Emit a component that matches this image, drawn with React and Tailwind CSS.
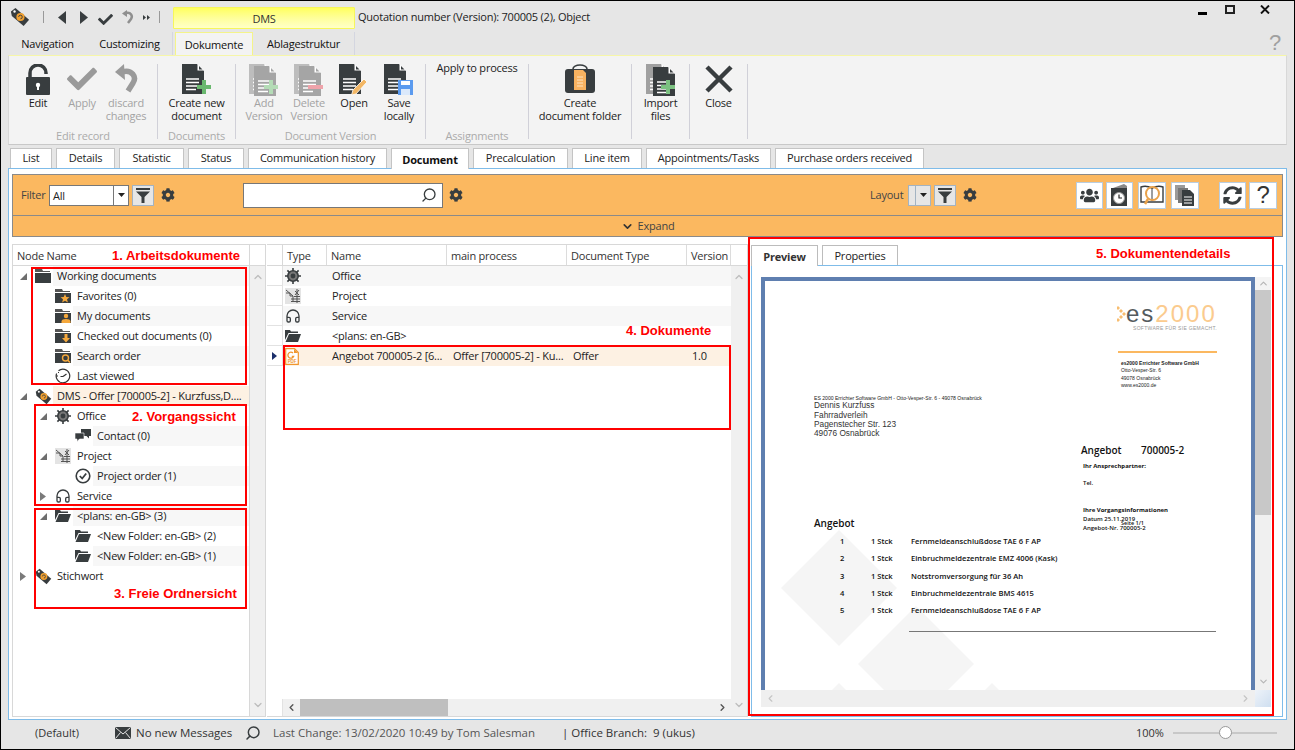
import React from "react";
import { FaCog, FaCheck, FaUsers, FaSyncAlt } from "react-icons/fa";
import { Headphones, Search, ChevronUp, ChevronDown, ChevronLeft, ChevronRight } from "lucide-react";

const DARK = "#383d3f";

/* ---------- Icons ---------- */
const TagIcon = ({ size = 20 }) => (
  <svg width={size} height={size} viewBox="0 0 22 22">
    <path d="M1 5 L6 1 L21 14 L15 21 L2 10 Z" fill={DARK} />
    <circle cx="11.5" cy="11" r="4.5" fill="#f0a030" />
    <path d="M9.5 11 a2 2 0 1 1 2 2" fill="none" stroke={DARK} strokeWidth="1" />
    <circle cx="5" cy="5" r="1.3" fill="#fff" />
  </svg>
);

const Funnel = () => (
  <svg width="14" height="15" viewBox="0 0 14 15">
    <rect x="0" y="0" width="14" height="2" fill={DARK} />
    <path d="M0 3.5 H14 L8.5 9 V15 H5.5 V9 Z" fill={DARK} />
  </svg>
);

const Gear = () => <FaCog size={14} color={DARK} />;

const Caret = () => (
  <svg width="7" height="4" viewBox="0 0 7 4">
    <path d="M0 0 H7 L3.5 4 Z" fill="#222" />
  </svg>
);

// dark sheet with a folded corner, the overlay is drawn on top
const DocSheet = ({ fill = DARK, x = 0, y = 0 }) => (
  <g transform={`translate(${x} ${y})`}>
    <path d="M0 0 H15 L22 7 V30 H0 Z" fill={fill} />
    <path d="M16 1 L21 6 H16 Z" fill="#fff" />
    <path d="M15.5 0 L15.5 6.5 L22 6.5 Z" fill="#fff" />
    <path d="M17 2 L20.5 5.5 H17 Z" fill={fill} />
    <path d="M4 15 H17 M4 18.5 H17 M4 22 H17 M4 25.5 H14" stroke="#fff" strokeWidth="1.5" />
  </g>
);

const Plus = ({ color = "#69b86e" }) => (
  <path d="M20 16 H24 V21 H29 V25 H24 V30 H20 V25 H15 V21 H20 Z" fill={color} />
);

const NewDocIcon = () => (
  <svg width="30" height="32" viewBox="0 0 30 32">
    <DocSheet />
    <Plus />
  </svg>
);

const AddVersionIcon = () => (
  <svg width="30" height="32" viewBox="0 0 30 32">
    <DocSheet fill="#bdbdbd" x="0" y="0" />
    <DocSheet fill="#a5a5a5" x="5" y="2" />
    <Plus color="#b4dcb6" />
  </svg>
);

const DeleteVersionIcon = () => (
  <svg width="30" height="32" viewBox="0 0 30 32">
    <DocSheet fill="#bdbdbd" x="0" y="0" />
    <DocSheet fill="#a5a5a5" x="5" y="2" />
    <rect x="14" y="21" width="15" height="4" fill="#eea3aa" />
  </svg>
);

const OpenIcon = () => (
  <svg width="30" height="32" viewBox="0 0 30 32">
    <DocSheet />
    <path d="M25 15 L28 18 L17 30 L12.5 31 L14 26 Z" fill="#f3b765" stroke="#fff" strokeWidth="0.8" />
  </svg>
);

const SaveIcon = () => (
  <svg width="30" height="32" viewBox="0 0 30 32">
    <DocSheet />
    <rect x="14" y="16" width="15" height="15" fill="#5b9bef" />
    <rect x="17" y="17" width="9" height="4" fill="#fff" />
    <rect x="17" y="25" width="9" height="6" fill="#dbe9fb" />
  </svg>
);

const LockIcon = () => (
  <svg width="26" height="32" viewBox="0 0 26 32">
    <path d="M5 14 V9 a8 8 0 0 1 16 0 V10" fill="none" stroke={DARK} strokeWidth="3.5" />
    <rect x="1" y="13" width="24" height="18" rx="1" fill={DARK} />
    <circle cx="13" cy="21" r="2.2" fill="#fff" />
    <rect x="12" y="21" width="2" height="5" fill="#fff" />
  </svg>
);

const ApplyIcon = () => <FaCheck size={30} color="#9a9a9a" />;

const UndoIcon = () => (
  <svg width="24" height="30" viewBox="0 0 24 30">
    <path d="M8 8 C 18 5, 23 13, 19 19 L14 27" fill="none" stroke="#9a9a9a" strokeWidth="5.5" />
    <path d="M1 8 L10 0 L11 16 Z" fill="#9a9a9a" />
  </svg>
);

const BriefcaseIcon = () => (
  <svg width="32" height="30" viewBox="0 0 32 30">
    <path d="M9 5 a7 4 0 0 1 14 0" fill="none" stroke={DARK} strokeWidth="1.6" />
    <rect x="1" y="5" width="30" height="24" rx="3" fill={DARK} />
    <path d="M10 6 H19 L22 9 V26 H10 Z" fill="#f8b260" />
    <path d="M13 13 H19 M13 16 H19 M13 19 H19 M13 22 H19" stroke="#fde3c2" strokeWidth="1" />
  </svg>
);

const ImportIcon = () => (
  <svg width="30" height="32" viewBox="0 0 30 32">
    <DocSheet fill="#a0a0a0" x="0" y="0" />
    <DocSheet x="7" y="3" />
    <Plus color="#7cc181" />
  </svg>
);

const CloseIcon = () => (
  <svg width="30" height="30" viewBox="0 0 30 30">
    <path d="M3 3 L27 27 M27 3 L3 27" stroke={DARK} strokeWidth="4.5" />
  </svg>
);

const ExpandedArrow = () => (
  <svg width="7" height="7" viewBox="0 0 7 7">
    <path d="M7 0 V7 H0 Z" fill="#6e6e6e" />
  </svg>
);

const CollapsedArrow = () => (
  <svg width="6" height="9" viewBox="0 0 6 9">
    <path d="M0 0 L6 4.5 L0 9 Z" fill="#7a7a7a" />
  </svg>
);

const Folder = ({ children }) => (
  <svg width="16" height="16" viewBox="0 0 16 16">
    <path d="M0 1 H7 L8 3 H15 V4 H0 Z" fill="#555" />
    <path d="M0 5 H16 V15 H0 Z" fill={DARK} />
    {children}
  </svg>
);

const FolderStar = () => (
  <Folder>
    <path d="M10 6 L11.3 9 L14.5 9.2 L12 11.3 L12.9 14.5 L10 12.7 L7.1 14.5 L8 11.3 L5.5 9.2 L8.7 9 Z" fill="#f5a83c" />
  </Folder>
);
const FolderUser = () => (
  <Folder>
    <circle cx="11" cy="8" r="2.2" fill="#f5a83c" />
    <path d="M6.5 15 V13 Q7 11 11 11 Q15 11 15.5 13 V15 Z" fill="#f5a83c" />
  </Folder>
);
const FolderDown = () => (
  <Folder>
    <path d="M9.5 6 H12.5 V10 H15 L11 14.5 L7 10 H9.5 Z" fill="#f5a83c" />
  </Folder>
);
const FolderSearch = () => (
  <Folder>
    <circle cx="10.5" cy="10" r="3" fill="none" stroke="#f5a83c" strokeWidth="1.4" />
    <path d="M12.5 12 L15 14.5" stroke="#f5a83c" strokeWidth="1.6" />
  </Folder>
);

const OpenFolder = () => (
  <svg width="16" height="14" viewBox="0 0 16 14">
    <path d="M0 1 H5 L6 2.5 H13 V4 H3.5 L0 11 Z" fill={DARK} />
    <path d="M4 5 H16 L13 13 H0.5 Z" fill={DARK} />
  </svg>
);

const ClockIcon = () => (
  <svg width="16" height="16" viewBox="0 0 16 16">
    <path d="M3.5 2.8 A6.8 6.8 0 1 1 1.6 5.5" fill="none" stroke="#333" strokeWidth="1.2" />
    <path d="M1 8 H3 M3 4 L4 5" stroke="#333" strokeWidth="1" />
    <path d="M8 8.5 L11.5 6 M8 8.5 L5.5 8.5" stroke="#333" strokeWidth="1.2" />
  </svg>
);

const WheelIcon = () => (
  <svg width="16" height="16" viewBox="0 0 16 16">
    <path d="M8 0 V16 M0 8 H16 M2.4 2.4 L13.6 13.6 M13.6 2.4 L2.4 13.6" stroke={DARK} strokeWidth="1.6" />
    <circle cx="8" cy="8" r="5.2" fill="#777" stroke={DARK} strokeWidth="1.6" />
    <circle cx="8" cy="8" r="2.4" fill={DARK} />
  </svg>
);

const ProjectIcon = () => (
  <svg width="16" height="16" viewBox="0 0 16 16">
    <rect width="16" height="16" fill="#e4e4e4" />
    <path d="M1 2 L8 8 V14 M1 5 H5 V8 H8 M6 11 H15 M6 13.5 H15 M9 8.5 H15 M10 3 L14 7 M14 2 L10 7 M12 1 V15" stroke="#555" strokeWidth="1" fill="none" />
  </svg>
);

const CheckCircle = () => (
  <svg width="16" height="16" viewBox="0 0 16 16">
    <circle cx="8" cy="8" r="6.8" fill="#fff" stroke={DARK} strokeWidth="1.6" />
    <path d="M4.8 8 L7.2 10.5 L11.2 5.5" fill="none" stroke={DARK} strokeWidth="1.8" />
  </svg>
);

const ChatIcon = () => (
  <svg width="16" height="14" viewBox="0 0 16 14">
    <path d="M6 0 H16 V7 H14 V9.5 L11.5 7 H6 Z" fill={DARK} />
    <path d="M0 4 H9 V10 H4.5 L2 12.5 V10 H0 Z" fill={DARK} stroke="#fff" strokeWidth="0.6" />
  </svg>
);

const HeadsetIcon = () => <Headphones size={16} color={DARK} strokeWidth={2} />;

const PdfIcon = () => (
  <svg width="14" height="17" viewBox="0 0 14 17">
    <path d="M0.7 0.7 H9.5 L13.3 4.5 V16.3 H0.7 Z" fill="#fff" stroke="#f0962e" strokeWidth="1.2" />
    <path d="M9 1 V5 H13 Z" fill="#f0962e" />
    <path d="M8 5 A3 3 0 1 0 8.6 8.5 H6.8" fill="none" stroke="#f0962e" strokeWidth="1.3" />
    <text x="7" y="15" textAnchor="middle" fontSize="4.5" fontWeight="700" fill="#f0962e" fontFamily="Liberation Sans, sans-serif">PDF</text>
  </svg>
);

const Diamonds = () => (
  <svg width="9" height="18" viewBox="0 0 9 18" className="shrink-0">
    <path d="M1 1 L3 3 L1 5 L-1 3 Z M4 4 L6 6 L4 8 L2 6 Z M7 7 L9 9 L7 11 L5 9 Z M4 10 L6 12 L4 14 L2 12 Z M1 13 L3 15 L1 17 L-1 15 Z" fill="#f8bd70" />
  </svg>
);

const ClockDocIcon = () => (
  <svg width="20" height="22" viewBox="0 0 20 22">
    <path d="M3 4 L14 0 L17 2 L17 6 Z" fill="#888" />
    <path d="M1 4 H17 V22 H1 Z" fill={DARK} />
    <circle cx="9" cy="14" r="5.5" fill="#fff" stroke="#999" strokeWidth="1" />
    <path d="M9 10.5 V14 H12" fill="none" stroke="#222" strokeWidth="1.2" />
  </svg>
);

const BookSearchIcon = () => (
  <svg width="24" height="22" viewBox="0 0 24 22">
    <path d="M1 3 Q6 1 12 4 Q18 1 23 3 V18 H1 Z" fill="#fff" stroke={DARK} strokeWidth="1.4" />
    <path d="M12 4 V17" stroke={DARK} strokeWidth="1" />
    <circle cx="12.5" cy="9.5" r="6.5" fill="none" stroke="#e9a24a" strokeWidth="2" />
    <path d="M8 15 L5 20" stroke="#e9a24a" strokeWidth="2.5" />
  </svg>
);

const DocsIcon = () => (
  <svg width="20" height="22" viewBox="0 0 20 22">
    <rect x="0" y="1" width="10" height="15" fill="#9b9b9b" />
    <rect x="3" y="4" width="10" height="15" fill="#777" />
    <path d="M7 6 H15 L19 10 V22 H7 Z" fill={DARK} />
    <path d="M9 13 H17 M9 16 H17 M9 19 H17" stroke="#fff" strokeWidth="1.2" />
  </svg>
);

const MailIcon = () => (
  <svg width="16" height="12" viewBox="0 0 16 12" className="shrink-0">
    <rect width="16" height="12" fill={DARK} />
    <path d="M0.5 0.5 L8 7 L15.5 0.5 M0.5 11.5 L5.5 5.5 M15.5 11.5 L10.5 5.5" fill="none" stroke="#e6e6e6" strokeWidth="1" />
  </svg>
);

/* ---------- Ribbon ---------- */
const RibbonBtn = ({ icon, label, off, className = "w-[44px]" }) => (
  <div className={`flex flex-col items-center shrink-0 ${className}`}>
    <div className="h-[32px] w-full flex items-start justify-center">{icon}</div>
    <div className={`text-center leading-[13px] text-[11px] ${off ? "text-[#a3a3a3]" : "text-[#1c1c1c]"}`}>
      {label}
    </div>
  </div>
);

const RibbonGroup = ({ width, label, pad = "", children }) => (
  <div className={`flex flex-col h-[75px] border-r border-[#d0d0d8] ${width}`}>
    <div className={`flex-1 flex ${pad}`}>{children}</div>
    <div className="h-[14px] -mb-[4px] leading-[14px] text-center text-[11px] text-[#ababab]">{label}</div>
  </div>
);

/* ---------- Tree ---------- */
const indents = ["w-0", "w-5", "w-10"];

const treeRows = [
  { level: 0, open: true, icon: <Folder />, text: "Working documents", bg: "bg-[#f7f7f7]" },
  { level: 1, icon: <FolderStar />, text: "Favorites (0)" },
  { level: 1, icon: <FolderUser />, text: "My documents", bg: "bg-[#f7f7f7]" },
  { level: 1, icon: <FolderDown />, text: "Checked out documents (0)" },
  { level: 1, icon: <FolderSearch />, text: "Search order", bg: "bg-[#f7f7f7]" },
  { level: 1, icon: <ClockIcon />, text: "Last viewed" },
  { level: 0, open: true, icon: <TagIcon size={17} />, text: "DMS - Offer [700005-2] - Kurzfuss,D....", bg: "bg-[#fdf1e3]" },
  { level: 1, open: true, icon: <WheelIcon />, text: "Office" },
  { level: 2, icon: <ChatIcon />, text: "Contact (0)", bg: "bg-[#f7f7f7]" },
  { level: 1, open: true, icon: <ProjectIcon />, text: "Project" },
  { level: 2, icon: <CheckCircle />, text: "Project order (1)", bg: "bg-[#f7f7f7]" },
  { level: 1, closed: true, icon: <HeadsetIcon />, text: "Service" },
  { level: 1, open: true, icon: <OpenFolder />, text: "<plans: en-GB> (3)", bg: "bg-[#f7f7f7]" },
  { level: 2, icon: <OpenFolder />, text: "<New Folder: en-GB> (2)" },
  { level: 2, icon: <OpenFolder />, text: "<New Folder: en-GB> (1)", bg: "bg-[#f7f7f7]" },
  { level: 0, closed: true, icon: <TagIcon size={17} />, text: "Stichwort" },
];

const TreeRow = ({ level, open, closed, icon, text, bg = "" }) => (
  <div className="flex items-center h-5">
    <div className={`shrink-0 ${indents[level]}`} />
    <div className="w-[22px] pl-[7px] shrink-0 flex items-center">
      {open && <ExpandedArrow />}
      {closed && <CollapsedArrow />}
    </div>
    <div className="w-[18px] shrink-0 flex items-center">{icon}</div>
    <div className={`flex-1 h-5 px-1 leading-5 truncate ${bg}`}>{text}</div>
  </div>
);

/* ---------- Document grid ---------- */
const docRows = [
  { icon: <WheelIcon />, name: "Office", bg: "bg-[#f7f7f7]" },
  { icon: <ProjectIcon />, name: "Project", bg: "bg-white" },
  { icon: <HeadsetIcon />, name: "Service", bg: "bg-[#f7f7f7]" },
  { icon: <OpenFolder />, name: "<plans: en-GB>", bg: "bg-white" },
  {
    icon: <PdfIcon />,
    name: "Angebot 700005-2 [6...",
    proc: "Offer [700005-2] - Ku...",
    type: "Offer",
    ver: "1.0",
    bg: "bg-[#fdf1e3]",
    current: true,
  },
];

const HeadCell = ({ width, children }) => (
  <div className={`h-full shrink-0 border-r border-[#dcdcdc] pl-1 leading-[21px] ${width}`}>{children}</div>
);

/* ---------- Preview page ---------- */
const offerLines = [
  ["1", "Fernmeldeanschlußdose TAE 6 F AP"],
  ["2", "Einbruchmeldezentrale EMZ 4006 (Kask)"],
  ["3", "Notstromversorgung für 36 Ah"],
  ["4", "Einbruchmeldezentrale BMS 4615"],
  ["5", "Fernmeldeanschlußdose TAE 6 F AP"],
];

const PreviewPage = () => (
  <div className="relative w-[494px] h-[413px] shrink-0 overflow-hidden bg-white border-x-4 border-t-4 border-[#5f7fb0] text-[#111] tracking-normal">
    {/* watermark of the letter paper */}
    <svg className="absolute left-0 top-0" width="486" height="409" viewBox="0 0 486 409">
      <g fill="#f5f5f5">
        <path d="M74 249 L132 307 L74 365 L16 307 Z" />
        <path d="M151 325 L209 383 L151 441 L93 383 Z" />
        <path d="M74 402 L132 460 L74 518 L16 460 Z" />
        <path d="M227 402 L285 460 L227 518 L169 460 Z" />
      </g>
    </svg>
    <div className="absolute left-[356px] top-[239px] text-[5.5px] leading-[6px] font-semibold">Seite 1/1</div>

    <div className="relative">
      <div className="ml-[352px] mt-[21px] h-[23px] flex items-center w-[102px]">
        <Diamonds />
        <span className="font-['Liberation_Sans',sans-serif] text-[24px] leading-[23px] tracking-[2px] text-[#555b5e]">
          es<span className="text-[#fbcb8e]">2000</span>
        </span>
      </div>
      <div className="ml-[352px] w-[100px] h-[7px] text-right font-['Liberation_Sans',sans-serif] text-[5px] leading-[7px] tracking-[0.3px] text-[#999]">
        SOFTWARE FÜR SIE GEMACHT.
      </div>
      <div className="ml-[353px] mt-[19px] w-[99px] h-[2px] bg-[#fbb860]" />
      <div className="ml-[356px] mt-[7px] font-['Liberation_Sans',sans-serif] text-[5px] leading-[7.3px] text-[#222]">
        <div className="font-semibold">es2000 Errichter Software GmbH</div>
        <div>Otto-Vesper-Str. 6</div>
        <div>49078 Osnabrück</div>
        <div>www.es2000.de</div>
      </div>
      <div className="ml-[49px] mt-[6px] h-[6px] font-['Liberation_Sans',sans-serif] text-[5.1px] leading-[6px] text-[#222]">
        ES 2000 Errichter Software GmbH - Otto-Vesper-Str. 6 - 49078 Osnabrück
      </div>
      <div className="ml-[49px] font-['Liberation_Sans',sans-serif] text-[8.3px] leading-[9.4px] text-[#333]">
        <div>Dennis Kurzfuss</div>
        <div>Fahrradverleih</div>
        <div>Pagenstecher Str. 123</div>
        <div>49076 Osnabrück</div>
      </div>
      <div className="ml-[316px] mt-[5px] h-[12px] flex text-[10px] leading-[12px] font-semibold">
        <div className="w-[60px]">Angebot</div>
        <div>700005-2</div>
      </div>
      <div className="ml-[318px] mt-[7px] h-[6px] text-[6px] leading-[6px] font-bold">Ihr Ansprechpartner:</div>
      <div className="ml-[318px] mt-[11px] h-[6px] text-[6px] leading-[6px] font-semibold">Tel.</div>
      <div className="flex mt-[21px] h-[24px]">
        <div className="ml-[49px] w-[269px] pt-[10px] text-[10px] leading-[12px] font-semibold">Angebot</div>
        <div className="text-[6px] font-semibold">
          <div className="h-[6px] leading-[6px] font-bold">Ihre Vorgangsinformationen</div>
          <div className="h-[6px] mt-[3px] leading-[6px]">Datum 25.11.2019</div>
          <div className="h-[6px] mt-[3px] leading-[6px]">Angebot-Nr. 700005-2</div>
        </div>
      </div>
      <div className="mt-[2px] text-[7.6px] font-semibold">
        {offerLines.map(([nr, text]) => (
          <div key={nr} className="flex ml-[75px] h-[17.4px] leading-[17.4px]">
            <div className="w-[31px]">{nr}</div>
            <div className="w-[40px]">1 Stck</div>
            <div>{text}</div>
          </div>
        ))}
      </div>
      <div className="ml-[144px] mt-[11px] w-[307px] h-px bg-[#777]" />
    </div>
  </div>
);

/* ---------- Small controls ---------- */
const IconBtn = ({ width, margin, children }) => (
  <div className={`h-[27px] shrink-0 bg-white border border-[#b9cde0] flex items-center justify-center ${width} ${margin}`}>
    {children}
  </div>
);

const FunnelBtn = ({ margin }) => (
  <div className={`w-[22px] h-[21px] shrink-0 bg-[#e6e6e6] border border-[#a3b3c2] flex items-center justify-center ${margin}`}>
    <Funnel />
  </div>
);

const Box = ({ className }) => <div className={`absolute border-2 border-[#ff0000] ${className}`} />;

const RedLabel = ({ className, children }) => (
  <div className={`absolute font-['Liberation_Sans',sans-serif] font-bold text-[13px] tracking-normal leading-[14px] whitespace-nowrap text-[#ff0000] ${className}`}>
    {children}
  </div>
);

const tabs = [
  ["List", "w-[42px]"],
  ["Details", "w-[59px]"],
  ["Statistic", "w-[65px]"],
  ["Status", "w-[56px]"],
  ["Communication history", "w-[139px]"],
  ["Document", "w-[78px]", true],
  ["Precalculation", "w-[95px]"],
  ["Line item", "w-[70px]"],
  ["Appointments/Tasks", "w-[125px]"],
  ["Purchase orders received", "w-[149px]"],
];

/* ---------- App ---------- */
export default function App() {
  return (
    <div className="relative w-[1295px] h-[750px] overflow-hidden bg-[#e6e6e6] border border-black box-border font-['Open_Sans',sans-serif] text-[11px] tracking-[-0.22px] text-[#222]">
      {/* Title row */}
      <div className="flex items-start h-[31px] pl-[9px]">
        <div className="mt-[6px]"><TagIcon /></div>
        <div className="ml-[13px] mt-[10px] w-px h-[12px] bg-[#999]" />
        <svg className="ml-[14px] mt-[10px]" width="8" height="13" viewBox="0 0 8 13"><path d="M8 0 V13 L0 6.5 Z" fill={DARK} /></svg>
        <svg className="ml-[14px] mt-[10px]" width="8" height="13" viewBox="0 0 8 13"><path d="M0 0 V13 L8 6.5 Z" fill={DARK} /></svg>
        <div className="ml-[10px] mt-[11px]"><FaCheck size={15} color={DARK} /></div>
        <svg className="ml-[9px] mt-[9px]" width="12" height="14" viewBox="0 0 12 14">
          <path d="M4 3 C 9 2, 11 6, 9 9 L6 13" fill="none" stroke="#8f8f8f" strokeWidth="2.5" />
          <path d="M0 3.5 L5 0 V7 Z" fill="#8f8f8f" />
        </svg>
        <svg className="ml-[9px] mt-[14px]" width="7" height="5" viewBox="0 0 7 5"><path d="M0 0 L3 2.5 L0 5 Z M4 0 L7 2.5 L4 5 Z" fill={DARK} /></svg>
        <div className="ml-[9px] mt-[10px] w-px h-[12px] bg-[#999]" />
        <div className="ml-[13px] mt-[6px] w-[182px] h-[22px] rounded-[1px] border border-[#f7f75a] bg-gradient-to-b from-[#ffff5c] to-[#ffffc8] text-center leading-[21px] text-[#333]">
          DMS
        </div>
        <div className="ml-[3px] mt-[7px] leading-[18px]">Quotation number (Version): 700005 (2), Object</div>
        {/* window buttons */}
        <div className="ml-auto mr-[24px] mt-[4px] flex items-start">
          <div className="mt-[7px] w-[9px] h-[3px] bg-black" />
          <div className="ml-[18px] w-[10px] h-[9px] border-2 border-[#222]" />
          <svg className="ml-[25px]" width="10" height="9" viewBox="0 0 10 9"><path d="M1 0.5 L9 8.5 M9 0.5 L1 8.5" stroke="#111" strokeWidth="1.9" /></svg>
        </div>
      </div>

      {/* Ribbon tabs */}
      <div className="flex items-end h-[23px] pl-[7px] text-[#111]">
        <div className="w-[79px] h-[22px] leading-[22px] text-center">Navigation</div>
        <div className="w-[85px] h-[22px] leading-[22px] text-center">Customizing</div>
        <div className="w-px h-[23px] bg-[#d4d6e0]" />
        <div className="ml-[2px] w-[78px] h-[23px] leading-[24px] text-center bg-[#f3f3f3] border-x border-t border-[#f4f48a]">Dokumente</div>
        <div className="w-[101px] h-[22px] leading-[22px] text-center">Ablagestruktur</div>
        <div className="w-px h-[23px] bg-[#d4d6e0]" />
        <div className="ml-auto mr-[13px] self-start h-[23px] leading-[21px] text-[22px] text-[#a0a0a0] font-['Liberation_Sans',sans-serif]">?</div>
      </div>

      {/* Ribbon */}
      <div className="ml-[7px] w-[1279px] h-[90px] bg-[#f3f3f3] border-x border-b border-t border-x-[#d8d8d8] border-b-[#c8c8c8] border-t-[#f6f6a8] pt-[8px] flex items-start">
        <RibbonGroup width="w-[149px]" label="Edit record" pad="pl-[7px]">
          <RibbonBtn icon={<LockIcon />} label="Edit" />
          <RibbonBtn icon={<ApplyIcon />} label="Apply" off />
          <RibbonBtn icon={<UndoIcon />} label={<>discard<br />changes</>} off />
        </RibbonGroup>
        <RibbonGroup width="w-[78px]" label="Documents">
          <RibbonBtn className="w-full" icon={<NewDocIcon />} label={<>Create new<br />document</>} />
        </RibbonGroup>
        <RibbonGroup width="w-[190px]" label="Document Version" pad="pl-[6px] gap-px">
          <RibbonBtn icon={<AddVersionIcon />} label={<>Add<br />Version</>} off />
          <RibbonBtn icon={<DeleteVersionIcon />} label={<>Delete<br />Version</>} off />
          <RibbonBtn icon={<OpenIcon />} label="Open" />
          <RibbonBtn icon={<SaveIcon />} label={<>Save<br />locally</>} />
        </RibbonGroup>
        <RibbonGroup width="w-[103px]" label="Assignments">
          <div className="w-full text-center leading-[7px]">Apply to process</div>
        </RibbonGroup>
        <RibbonGroup width="w-[103px]" label="">
          <RibbonBtn className="w-full" icon={<BriefcaseIcon />} label={<>Create<br />document folder</>} />
        </RibbonGroup>
        <RibbonGroup width="w-[58px]" label="">
          <RibbonBtn className="w-full" icon={<ImportIcon />} label={<>Import<br />files</>} />
        </RibbonGroup>
        <RibbonGroup width="w-[58px]" label="">
          <RibbonBtn className="w-full" icon={<CloseIcon />} label="Close" />
        </RibbonGroup>
      </div>

      {/* Record tabs */}
      <div className="relative z-10 flex gap-1 pl-[9px] mt-[3px] h-[20px]">
        {tabs.map(([label, width, active]) => (
          <div
            key={label}
            className={`shrink-0 border-x border-t border-[#c4c4c4] text-center bg-white ${width} ${active ? "h-[21px] font-bold leading-[21px] text-[#111]" : "h-[20px] leading-[18px]"}`}
          >
            {label}
          </div>
        ))}
      </div>

      {/* Main panel */}
      <div className="ml-[7px] w-[1279px] h-[552px] bg-white border border-[#7fbce9] pt-[5px] px-[3px]">
        {/* Orange filter bar */}
        <div className="w-[1271px] h-[63px] bg-[#fbb860] border border-[#8a8a8a]">
          <div className="h-[41px] border-b border-[#8a8a8a] flex items-center pl-[8px] text-[#444]">
            <div className="w-[28px] shrink-0">Filter</div>
            <div className="w-[80px] h-[21px] shrink-0 bg-white border border-[#777] flex text-[#222]">
              <div className="flex-1 pl-[3px] leading-[19px]">All</div>
              <div className="w-[15px] border-l border-[#777] flex items-center justify-center"><Caret /></div>
            </div>
            <FunnelBtn margin="ml-[3px]" />
            <div className="ml-[7px] shrink-0"><Gear /></div>
            <div className="ml-[68px] w-[200px] h-[25px] shrink-0 bg-white border border-[#777] flex items-center justify-end pr-[5px]">
              <Search size={16} color={DARK} strokeWidth={2} className="-scale-x-100" />
            </div>
            <div className="ml-[6px] shrink-0"><Gear /></div>
            <div className="ml-[407px] w-[38px] shrink-0">Layout</div>
            <div className="w-[23px] h-[21px] shrink-0 bg-[#e6e6e6] border border-[#a3b3c2] flex">
              <div className="w-[7px] border-r border-[#a3b3c2]" />
              <div className="flex-1 flex items-center justify-center"><Caret /></div>
            </div>
            <FunnelBtn margin="ml-[3px]" />
            <div className="ml-[7px] shrink-0"><Gear /></div>
            <IconBtn width="w-[27px]" margin="ml-[99px]"><FaUsers size={19} color={DARK} /></IconBtn>
            <IconBtn width="w-[27px]" margin="ml-[3px]"><ClockDocIcon /></IconBtn>
            <IconBtn width="w-[28px]" margin="ml-[5px]"><BookSearchIcon /></IconBtn>
            <IconBtn width="w-[28px]" margin="ml-[5px]"><DocsIcon /></IconBtn>
            <IconBtn width="w-[27px]" margin="ml-[20px]"><FaSyncAlt size={19} color={DARK} /></IconBtn>
            <IconBtn width="w-[28px]" margin="ml-[3px]">
              <span className="font-['Liberation_Sans',sans-serif] text-[24px] leading-[24px] text-[#333]">?</span>
            </IconBtn>
          </div>
          <div className="h-[20px] flex items-center justify-center text-[#444] gap-1">
            <ChevronDown size={13} color="#333" strokeWidth={3} />
            <span>Expand</span>
          </div>
        </div>

        {/* Three panes */}
        <div className="flex mt-[7px] h-[473px]">
          {/* Tree */}
          <div className="w-[237px] shrink-0 border border-r-0 border-[#d8d8d8]">
            <div className="h-[21px] border-b border-[#d8d8d8] pl-1 leading-[21px] text-[#333]">Node Name</div>
            {treeRows.map((row) => (
              <TreeRow key={row.text} {...row} />
            ))}
          </div>
          <div className="w-[17px] shrink-0 flex flex-col border-y border-x border-[#d8d8d8]">
            <div className="h-[21px] shrink-0 border-b border-[#d8d8d8] bg-white" />
            <div className="flex-1 bg-[#f0f0f0] flex flex-col justify-between items-center py-[5px]">
              <ChevronUp size={12} color="#bdbdbd" strokeWidth={2.5} />
              <ChevronDown size={12} color="#bdbdbd" strokeWidth={2.5} />
            </div>
          </div>

          {/* Documents */}
          <div className="w-[481px] shrink-0 flex ml-px border-y border-[#d8d8d8]">
            <div className="w-[464px] shrink-0 flex flex-col">
              <div className="flex h-[21px] border-b border-[#d8d8d8] text-[#333] shrink-0">
                <div className="w-[16px] h-full shrink-0 border-r border-[#d8d8d8]" />
                <HeadCell width="w-[44px]">Type</HeadCell>
                <HeadCell width="w-[120px]">Name</HeadCell>
                <HeadCell width="w-[120px]">main process</HeadCell>
                <HeadCell width="w-[120px]">Document Type</HeadCell>
                <HeadCell width="w-[44px]">Version</HeadCell>
              </div>
              {docRows.map((row) => (
                <div key={row.name} className="flex h-5 shrink-0">
                  <div className="w-[16px] shrink-0 border-r border-b border-[#e2e2e2] flex items-center justify-center">
                    {row.current && (
                      <svg width="5" height="8" viewBox="0 0 5 8"><path d="M0 0 L5 4 L0 8 Z" fill="#1b2f6b" /></svg>
                    )}
                  </div>
                  <div className={`flex flex-1 leading-5 ${row.bg}`}>
                    <div className="w-[49px] shrink-0 pl-[2px] flex items-center">{row.icon}</div>
                    <div className="w-[120px] shrink-0 truncate">{row.name}</div>
                    <div className="w-[120px] shrink-0 pl-px truncate">{row.proc}</div>
                    <div className="w-[120px] shrink-0 pl-px">{row.type}</div>
                    <div className="flex-1">{row.ver}</div>
                  </div>
                </div>
              ))}
              <div className="flex-1" />
              <div className="h-[17px] flex shrink-0">
                <div className="w-[16px] border-r border-[#e2e2e2]" />
                <div className="flex-1 bg-[#f0f0f0] flex items-center">
                  <div className="w-[17px] flex justify-center"><ChevronLeft size={11} color="#555" strokeWidth={3} /></div>
                  <div className="w-[148px] h-full bg-[#bfbfbf]" />
                  <div className="ml-auto w-[17px] flex justify-center"><ChevronRight size={11} color="#555" strokeWidth={3} /></div>
                </div>
              </div>
            </div>
            <div className="flex-1 flex flex-col border-r border-[#d8d8d8]">
              <div className="h-[21px] shrink-0 border-b border-[#d8d8d8]" />
              <div className="flex-1 bg-[#f0f0f0] flex flex-col justify-between items-center py-[5px]">
                <ChevronUp size={12} color="#bdbdbd" strokeWidth={2.5} />
                <ChevronDown size={12} color="#bdbdbd" strokeWidth={2.5} />
              </div>
            </div>
          </div>

          {/* Preview pane */}
          <div className="ml-[3px] w-[532px] shrink-0 flex flex-col pt-px">
            <div className="relative z-10 flex gap-1 h-[20px] shrink-0">
              <div className="w-[67px] h-[21px] border-x border-t border-[#bcbcbc] bg-white text-center font-bold leading-[21px] text-[#333]">Preview</div>
              <div className="w-[76px] h-[20px] border-x border-t border-[#bcbcbc] bg-white text-center leading-[19px]">Properties</div>
            </div>
            <div className="h-[453px] border border-[#7fbce9] pl-[9px] pt-[11px]">
              <div className="flex w-[510px]">
                <PreviewPage />
                <div className="w-[16px] h-[413px] flex flex-col bg-[#f0f0f0]">
                  <div className="h-[13px] flex items-center justify-center bg-[#f4f4f4]"><ChevronUp size={11} color="#b5b5b5" strokeWidth={2.5} /></div>
                  <div className="h-[225px] bg-[#c8c8c8]" />
                  <div className="mt-auto h-[18px] flex items-center justify-center"><ChevronDown size={11} color="#b5b5b5" strokeWidth={2.5} /></div>
                </div>
              </div>
              <div className="flex w-[510px] h-[17px]">
                <div className="w-[494px] bg-[#efefef] flex items-center justify-between px-[4px]">
                  <ChevronLeft size={11} color="#c4c4c4" strokeWidth={2.5} />
                  <ChevronRight size={11} color="#c4c4c4" strokeWidth={2.5} />
                </div>
                <div className="flex-1 bg-gradient-to-br from-[#eef3f9] to-[#cfdff0]" />
              </div>
            </div>
          </div>
        </div>
      </div>

      {/* Status bar */}
      <div className="flex items-center h-[29px] pb-[3px] text-[11.5px] tracking-normal text-[#333]">
        <div className="ml-[34px] w-[80px] shrink-0 text-[11px]">(Default)</div>
        <MailIcon />
        <div className="ml-[5px] w-[109px] shrink-0">No new Messages</div>
        <Search size={16} color={DARK} strokeWidth={2.2} className="-scale-x-100 shrink-0" />
        <div className="ml-[12px] w-[289px] shrink-0 text-[#555]">Last Change: 13/02/2020 10:49 by Tom Salesman</div>
        <div className="shrink-0">| Office Branch:&nbsp; 9 (ukus)</div>
        <div className="ml-auto w-[28px] shrink-0 text-[11px]">100%</div>
        <div className="relative ml-[9px] mr-[17px] w-[104px] h-[2px] bg-[#c8c8c8] shrink-0">
          <div className="absolute left-[46px] -top-[6px] w-[13px] h-[13px] rounded-full bg-white border border-[#999]" />
        </div>
      </div>

      {/* Annotation boxes drawn over the screenshot */}
      <Box className="left-[30px] top-[266px] w-[216px] h-[118px]" />
      <RedLabel className="left-[111px] top-[248px]">1. Arbeitsdokumente</RedLabel>
      <Box className="left-[33px] top-[403px] w-[213px] h-[102px]" />
      <RedLabel className="left-[131px] top-[409px]">2. Vorgangssicht</RedLabel>
      <Box className="left-[33px] top-[507px] w-[213px] h-[101px]" />
      <RedLabel className="left-[113px] top-[586px]">3. Freie Ordnersicht</RedLabel>
      <Box className="left-[282px] top-[344px] w-[448px] h-[85px]" />
      <RedLabel className="left-[625px] top-[323px]">4. Dokumente</RedLabel>
      <Box className="left-[747px] top-[236px] w-[526px] h-[479px]" />
      <RedLabel className="left-[1095px] top-[246px]">5. Dokumentendetails</RedLabel>
    </div>
  );
}
